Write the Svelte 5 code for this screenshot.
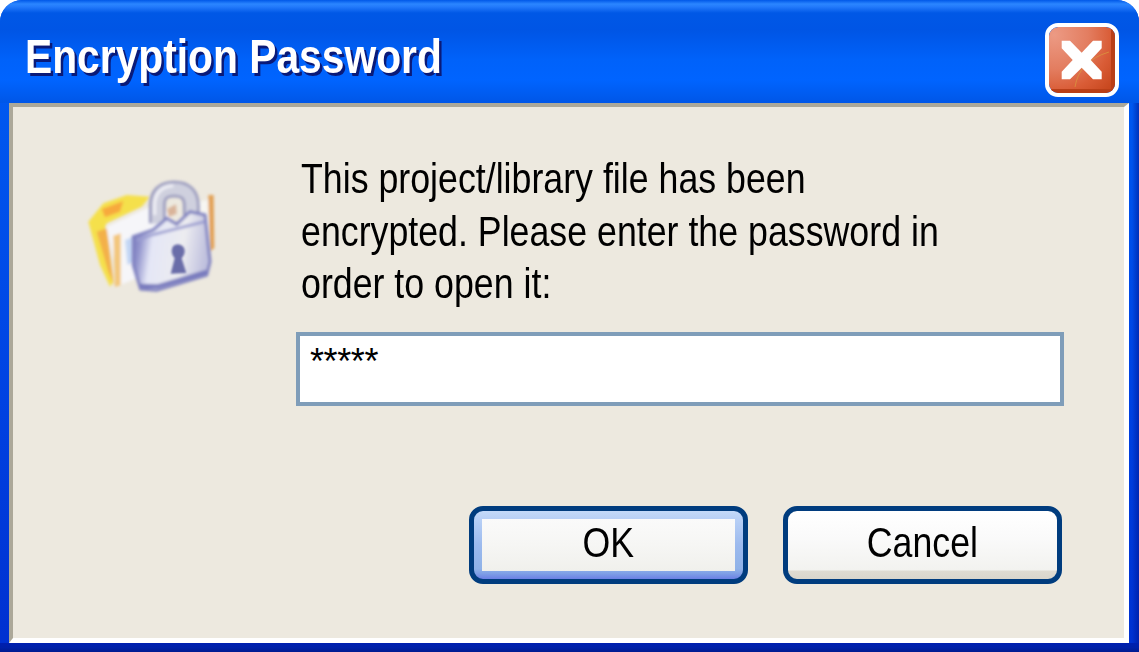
<script>
	let password = '*****';
</script>

<div class="window">
	<header class="titlebar">
		<h1>Encryption Password</h1>
		<button class="close" aria-label="Close">
			<svg viewBox="0 0 66 66" width="66" height="66">
				<defs>
					<radialGradient id="red" cx="0.08" cy="0.12" r="1.15">
						<stop offset="0" stop-color="#ec9a84" />
						<stop offset="0.45" stop-color="#e37d60" />
						<stop offset="0.75" stop-color="#d95c36" />
						<stop offset="1" stop-color="#c8481f" />
					</radialGradient>
				</defs>
				<rect width="66" height="66" fill="url(#red)" />
				<path d="M62 0 V62 H0 V66 H66 V0Z" fill="#b93f18" />
				<path d="M26 60 Q30 34 60 25" fill="none" stroke="#d9963f" stroke-width="1" opacity="0.8" />
				<path d="M12.7 13.7 H21 L32.7 25.7 L44 13.7 H52.7 V21.3 L41.7 33 L52.7 44.7 V52.3 H44 L32.7 40.7 L21 52.3 H12.7 V44.7 L23.7 33 L12.7 21.3Z" fill="#fff" />
			</svg>
		</button>
	</header>
	<main class="panel">
		<svg class="icon" viewBox="0 0 480 420" width="160" height="140">
			<defs>
				<filter id="soft" x="-10%" y="-10%" width="120%" height="120%"><feGaussianBlur stdDeviation="4" /></filter>
				<filter id="soft2" x="-20%" y="-20%" width="140%" height="140%"><feGaussianBlur stdDeviation="2.5" /></filter>
				<linearGradient id="body" x1="0" x2="1" y1="0" y2="0.15">
					<stop offset="0" stop-color="#7072b8" />
					<stop offset="0.14" stop-color="#9193cc" />
					<stop offset="0.3" stop-color="#e4e6f6" />
					<stop offset="0.7" stop-color="#ececf0" />
					<stop offset="1" stop-color="#c0c1de" />
				</linearGradient>
			</defs>
			<g filter="url(#soft)">
				<path d="M55 170 L100 115 L170 90 L240 95 L215 125 L110 175 L105 190 L130 350 L120 365 L90 300Z" fill="#f5e04c" />
				<path d="M95 132 L160 108 L150 140 L105 157Z" fill="#f7a93c" />
				<path d="M80 200 L110 190 L130 350 L135 365 L115 320Z" fill="#f3b04a" />
				<path d="M110 185 L240 125 L300 140 L300 300 L150 360Z" fill="#f6f6f9" />
				<path d="M165 225 L190 215 L192 290 L172 300Z" fill="#c5d8f4" />
				<path d="M130 212 L152 205 L152 360 L135 366Z" fill="#f3c67a" />
				<path d="M370 112 L415 105 L420 250 L398 262Z" fill="#f7f6f2" />
				<path d="M415 90 L431 90 L433 250 L419 258Z" fill="#e2a055" />
			</g>
			<g filter="url(#soft)">
				<path d="M262 175 V122 Q262 72 312 72 Q364 72 364 122 V150" fill="none" stroke="#9596bc" stroke-width="50" />
				<path d="M262 175 V122 Q262 72 312 72 Q364 72 364 122 V150" fill="none" stroke="#cfd0de" stroke-width="34" />
				<path d="M254 150 V118 Q256 66 310 62" fill="none" stroke="#eeeef4" stroke-width="10" />
				<path d="M292 132 L318 118 L320 146 L296 156Z" fill="#d9b49a" />
				<path d="M190 215 L250 195 L290 160 L320 178 L360 140 L405 150 L420 290 L410 330 L260 376 L212 372 L190 300Z" fill="url(#body)" stroke="#7f81c0" stroke-width="9" />
				<path d="M200 226 L252 208 L292 198 L404 170" fill="none" stroke="#9a9cd0" stroke-width="8" />
				<path d="M210 362 L262 364 L410 320" fill="none" stroke="#7779bd" stroke-width="12" />
			</g>
			<path d="M324 238 Q345 240 344 262 Q343 272 335 280 L349 324 L302 326 L314 280 Q304 268 305 257 Q307 238 324 238Z" fill="#6a6da9" filter="url(#soft2)" />
		</svg>
		<div class="content">
			<p>This project/library file has been<br />encrypted. Please enter the password in<br />order to open it:</p>
			<input type="text" bind:value={password} />
			<div class="buttons">
				<button class="btn default"><span class="face"><span class="label">OK</span></span></button>
				<button class="btn"><span class="face"><span class="label">Cancel</span></span></button>
			</div>
		</div>
	</main>
</div>

<style>
	:global(body) {
		background: #fff;
		overflow: hidden;
	}

	.window {
		width: 1139px;
		height: 652px;
		box-sizing: border-box;
		display: flex;
		flex-direction: column;
		border-radius: 22px 22px 0 0;
		padding: 0 10px 9px 9px;
		font-family: 'Liberation Sans', Arial, sans-serif;
		background:
			linear-gradient(90deg, transparent 1132px, #00148c88 1139px),
			linear-gradient(180deg, #0058f0 100px, #0042e2 400px, #0030d0 652px);
		position: relative;
		overflow: hidden;
	}

	.window::after {
		content: '';
		position: absolute;
		left: 0;
		right: 0;
		bottom: 0;
		height: 9px;
		background: linear-gradient(180deg, #001fb0, #0020a8 50%, #001a90);
	}

	.titlebar {
		margin: 0 -10px 0 -9px;
		height: 103px;
		flex: none;
		display: flex;
		align-items: center;
		justify-content: space-between;
		padding: 17px 20px 0 25px;
		box-sizing: border-box;
		background: linear-gradient(180deg, #0058e8 0, #2b86ff 4px, #2279fb 7px, #0058e6 13px, #0055e5 30px, #0062fa 60px, #0064ff 80px, #0058ea 100px, #0056e8 103px);
	}

	h1 {
		margin: 0 0 8px;
		color: #fff;
		font-size: 49px;
		font-weight: 700;
		text-shadow: 3px 3px 0 #0a1a78;
		white-space: nowrap;
		transform: scaleX(0.832);
		transform-origin: left center;
	}

	.close {
		width: 74px;
		height: 74px;
		padding: 0;
		border: 4px solid #fff;
		border-radius: 13px;
		background: none;
		overflow: hidden;
	}

	.close svg {
		display: block;
		border-radius: 9px;
	}

	.panel {
		flex: 1;
		display: flex;
		align-items: flex-start;
		box-sizing: border-box;
		background: #ede9df;
		border: 5px solid #fff;
		border-top: 4px solid #aca899;
		border-left: 4px solid #aca899;
		padding: 46px 60px 0 57px;
	}

	.icon {
		flex: none;
		margin-top: 12px;
		margin-right: 66px;
	}

	.content {
		flex: 1;
	}

	p {
		margin: 0 0 21px 5px;
		font-size: 42px;
		line-height: 52.6px;
		color: #000;
		white-space: nowrap;
		transform: scaleX(0.851);
		transform-origin: left center;
	}

	input {
		display: block;
		width: 100%;
		height: 74px;
		box-sizing: border-box;
		border: 4px solid #7f9db9;
		background: #fff;
		padding: 0 10px 14px;
		font: 36px 'Liberation Sans', Arial, sans-serif;
		letter-spacing: -0.4px;
		color: #000;
		outline: none;
	}

	.buttons {
		display: flex;
		justify-content: flex-end;
		gap: 35px;
		margin-top: 100px;
		padding-right: 2px;
	}

	.btn {
		width: 279px;
		height: 78px;
		box-sizing: border-box;
		border: 5px solid #003c7e;
		border-radius: 14px;
		font: 42px 'Liberation Sans', Arial, sans-serif;
		color: #000;
		padding: 0;
		background: linear-gradient(180deg, #fff 0, #fafafa 40%, #f2f2ef 87%, #dfdbd2 88%, #d9d5cc 100%);
		background-clip: padding-box;
		overflow: hidden;
	}

	.face {
		display: flex;
		height: 100%;
		align-items: center;
		justify-content: center;
		padding-bottom: 3px;
		box-sizing: border-box;
	}

	.label {
		display: inline-block;
		transform: scaleX(0.85);
	}

	.default {
		padding: 8px;
		background: linear-gradient(180deg, #c4daf9 0, #b8d0f6 12%, #9cbaee 50%, #8fb2e8 85%, #7f9fe6 92%, #6c80e4 100%);
	}

	.default .face {
		background: linear-gradient(180deg, #fafafa 0, #f6f6f4 50%, #f0f0ec 100%);
	}
</style>
